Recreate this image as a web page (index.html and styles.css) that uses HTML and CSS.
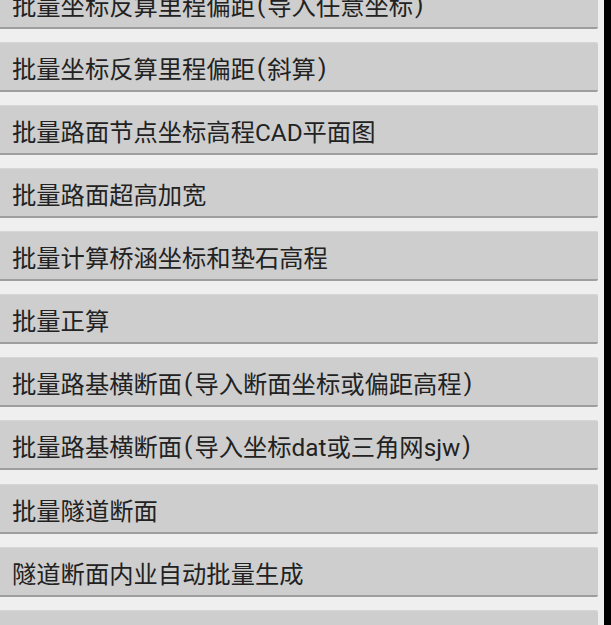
FILE: index.html
```html
<!DOCTYPE html>
<html lang="zh-CN">
<head>
<meta charset="utf-8">
<title>批量计算</title>
<link rel="stylesheet" href="styles.css">
</head>
<body>
<div class="screen">
  <div class="list">
    <div class="btn">批量坐标反算里程偏距<span class="p">(</span>导入任意坐标<span class="p">)</span></div>
    <div class="btn">批量坐标反算里程偏距<span class="p">(</span>斜算<span class="p">)</span></div>
    <div class="btn">批量路面节点坐标高程CAD平面图</div>
    <div class="btn">批量路面超高加宽</div>
    <div class="btn">批量计算桥涵坐标和垫石高程</div>
    <div class="btn">批量正算</div>
    <div class="btn">批量路基横断面<span class="p">(</span>导入断面坐标或偏距高程<span class="p">)</span></div>
    <div class="btn">批量路基横断面<span class="p">(</span>导入坐标dat或三角网sjw<span class="p">)</span></div>
    <div class="btn">批量隧道断面</div>
    <div class="btn">隧道断面内业自动批量生成</div>
    <div class="btn"></div>
  </div>
  <div class="edge"></div>
</div>
</body>
</html>
```
FILE: styles.css
```css
html, body {
  margin: 0;
  padding: 0;
  height: 100%;
  overflow: hidden;
  background: #efefef;
}
.screen {
  display: flex;
  height: 625px;
  overflow: hidden;
}
.list {
  width: 604px;
  flex: none;
  margin-top: -21.5px;
  display: flex;
  flex-direction: column;
  gap: 13.14px;
}
.btn {
  flex: none;
  box-sizing: border-box;
  width: 598px;
  height: 50px;
  padding: 2px 0 0 12px;
  display: flex;
  align-items: center;
  background: #cecece;
  border-top: 1px solid #d6d6d6;
  border-bottom: 2px solid #9e9e9e;
  border-radius: 0 2px 2px 0;
  font-family: Roboto, "Noto Sans CJK SC", sans-serif;
  font-size: 24.3px;
  color: #222;
  white-space: nowrap;
}
.p {
  margin: 0 2px;
}
.edge {
  flex: 1;
  background: #000;
}
```
